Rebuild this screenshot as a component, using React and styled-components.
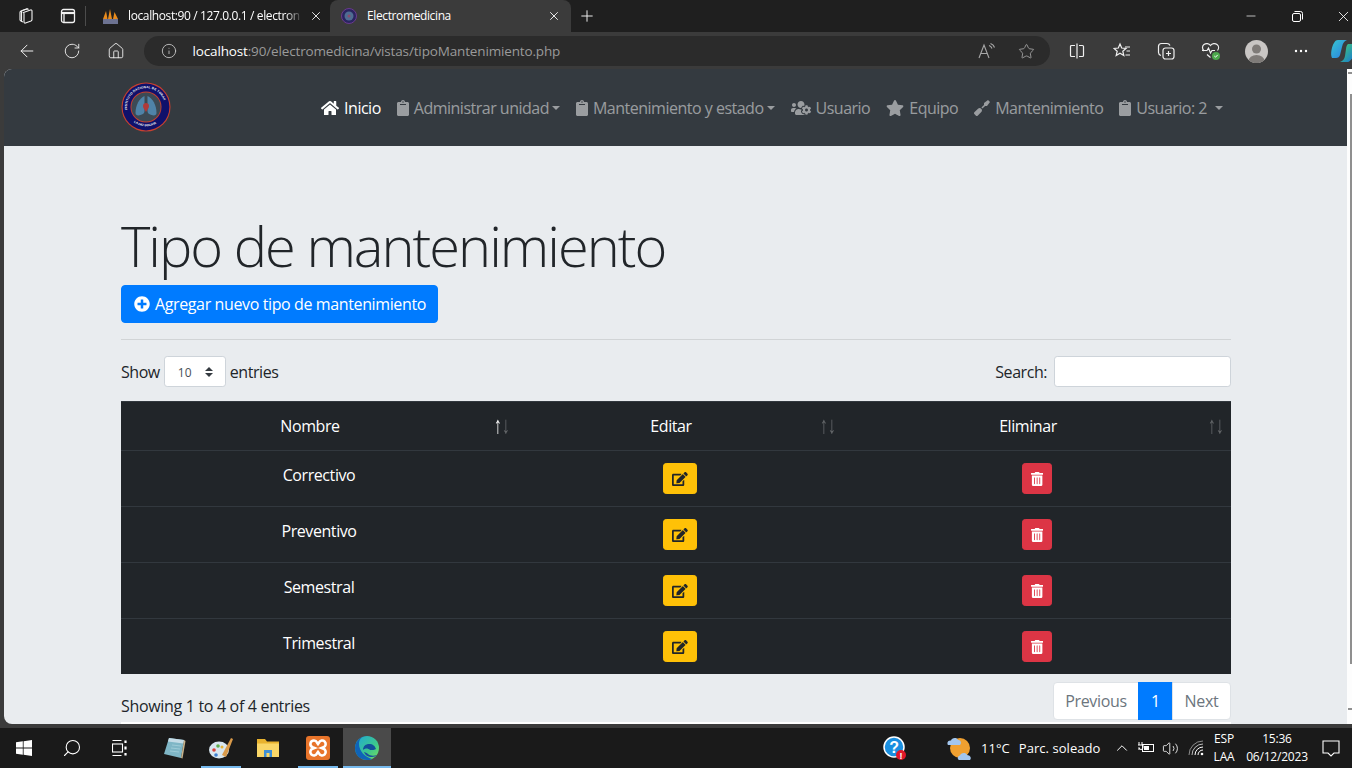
import styled, { createGlobalStyle } from "styled-components";
import {
  FaHome,
  FaClipboard,
  FaUsersCog,
  FaStar,
  FaScrewdriver,
  FaPlusCircle,
  FaEdit,
  FaTrashAlt,
} from "react-icons/fa";
import { ArrowLeft, RotateCw, Home, Info, Star, Plus, X, Minus, Search, ChevronUp, Volume2 } from "lucide-react";

const SANS = `"Open Sans", "Noto Sans", "Liberation Sans", sans-serif`;

const GlobalStyle = createGlobalStyle`
  html, body { margin: 0; padding: 0; height: 100%; overflow: hidden; background: #3b3b3b; }
  body { font-family: ${SANS}; font-size: 16px; line-height: 1.5; color: #212529; }
  * { box-sizing: border-box; }
`;

const Screen = styled.div`
  width: 1352px;
  height: 768px;
  display: flex;
  flex-direction: column;
  overflow: hidden;
  background: #3b3b3b;
`;

/* browser chrome */
const TabStrip = styled.div`
  height: 32px;
  flex: none;
  display: flex;
  align-items: flex-end;
  padding-left: 8px;
  background: #1f1f1f;
  color: #fff;
  font-size: 12px;
  letter-spacing: -0.38px;
`;

const StripButton = styled.div`
  width: 36px;
  height: 32px;
  margin-left: ${(p) => p.$ml || 0}px;
  margin-right: ${(p) => p.$mr || 0}px;
  flex: none;
  display: flex;
  align-items: center;
  justify-content: center;
  color: #f2f2f2;
`;

const StripDivider = styled.div`
  width: 1px;
  height: 20px;
  margin: 0 4px 6px -1px;
  background: #4c4c4c;
`;

const Tab = styled.div`
  width: ${(p) => p.$w}px;
  height: 32px;
  flex: none;
  display: flex;
  align-items: center;
  padding: 0 ${(p) => p.$pr}px 0 ${(p) => p.$pl}px;
  gap: 6px;
  border-radius: 8px 8px 0 0;
  background: ${(p) => (p.$active ? "#3b3b3b" : "transparent")};
`;

const TabTitle = styled.span`
  flex: 1;
  min-width: 0;
  margin-left: ${(p) => p.$ml || 4}px;
  white-space: nowrap;
  mask-image: ${(p) => (p.$fade ? "linear-gradient(to right, #000 90%, transparent)" : "none")};
`;

const WindowControls = styled.div`
  margin-left: auto;
  margin-right: -14px;
  display: flex;
  align-self: stretch;
`;

const WindowButton = styled.div`
  width: 46px;
  display: flex;
  align-items: center;
  justify-content: center;
  color: #fff;
`;

const Toolbar = styled.div`
  height: 37px;
  flex: none;
  display: flex;
  align-items: center;
  padding-left: 5px;
  padding-top: 1px;
  background: #3b3b3b;
`;

const ToolButton = styled.div`
  width: ${(p) => p.$w || 44.8}px;
  height: 30px;
  flex: none;
  display: flex;
  align-items: center;
  justify-content: center;
  color: #f0f0f0;
`;

const AddressBar = styled.div`
  width: 906px;
  height: 30px;
  flex: none;
  margin: 0 5px 0 5px;
  padding: 0 15px 0 17px;
  display: flex;
  align-items: center;
  border-radius: 15px;
  background: #2b2b2b;
  color: #c8c8c8;
`;

const Url = styled.div`
  flex: 1;
  margin-left: 16px;
  font-size: 13.5px;
  letter-spacing: -0.15px;
  color: #9a9a9a;
  b { font-weight: 400; color: #fff; }
`;

const AddressIcons = styled.div`
  display: flex;
  align-items: center;
  gap: 22px;
  color: #a8a8a8;
`;

const Avatar = styled.div`
  width: 23px;
  height: 23px;
  border-radius: 50%;
  overflow: hidden;
  background: #c9c6c4;
`;

/* page */
const Viewport = styled.div`
  height: 655px;
  flex: none;
  display: flex;
  padding-left: 4px;
`;

const Page = styled.div`
  flex: 1;
  min-width: 0;
  overflow: hidden;
  border-radius: 8px 0 0 8px;
  background: #e9ecef;
`;

const Scrollbar = styled.div`
  position: relative;
  width: 5px;
  flex: none;
  background: #fdfdfd;
`;

const ScrollThumb = styled.div`
  position: absolute;
  top: 25px;
  left: 3px;
  width: 2px;
  height: 570px;
  background: #8f8f8f;
`;

const ScrollArrow = styled.div`
  position: absolute;
  left: 1px;
  top: ${(p) => p.$top}px;
  width: 4px;
  height: 2px;
  background: #8f8f8f;
`;

const NavBar = styled.nav`
  height: 77px;
  padding-left: 117px;
  padding-right: 116px;
  display: flex;
  align-items: center;
  justify-content: space-between;
  background: #343a40;
`;

const Brand = styled.div`
  width: 50px;
  height: 50px;
  margin-top: -1px;
`;

const NavLinks = styled.div`
  display: flex;
  align-items: center;
`;

const NavLink = styled.a`
  display: flex;
  align-items: center;
  gap: 5px;
  padding: 8px;
  white-space: nowrap;
  letter-spacing: -0.5px;
  color: ${(p) => (p.$active ? "#fff" : "rgba(255,255,255,.5)")};
`;

/* FontAwesome glyphs are wider or narrower than one em, so each gets its width */
const Glyph = styled.span`
  width: ${(p) => p.$w}px;
  height: ${(p) => p.$h || 16}px;
  flex: none;
  display: inline-flex;
  svg { width: 100%; height: 100%; }
`;

const Caret = styled.span`
  width: 0;
  height: 0;
  margin-left: ${(p) => p.$ml ?? -2}px;
  border-top: 4.8px solid currentColor;
  border-left: 4.8px solid transparent;
  border-right: 4.8px solid transparent;
`;

const Container = styled.main`
  width: 1110px;
  margin-left: 117px;
  padding-top: 64px;
`;

const Title = styled.h1`
  margin: 2px 0 6px;
  font-size: 56px;
  font-weight: 300;
  line-height: 1.2;
  letter-spacing: -2px;
  color: #212529;
`;

const PrimaryButton = styled.button`
  height: 38px;
  width: 317px;
  padding: 0 12px;
  display: flex;
  align-items: center;
  gap: 5px;
  border: 1px solid #007bff;
  border-radius: 4px;
  background: #007bff;
  color: #fff;
  font: inherit;
  letter-spacing: -0.38px;
  white-space: nowrap;
`;

const Rule = styled.hr`
  margin: 16px 0;
  border: 0;
  border-top: 1px solid rgba(0, 0, 0, 0.1);
`;

const TableTools = styled.div`
  display: flex;
  justify-content: space-between;
  align-items: center;
  margin-bottom: 14px;
  letter-spacing: -0.45px;
`;

const ToolLabel = styled.label`
  display: flex;
  align-items: center;
  gap: ${(p) => p.$gap}px;
`;

const EntriesSelect = styled.select`
  width: 62px;
  height: 31px;
  padding: 5px 24px 3px 13px;
  appearance: none;
  border: 1px solid #ced4da;
  border-radius: 3.2px;
  font-family: inherit;
  font-size: 12px;
  color: #495057;
  background: #fff url("data:image/svg+xml,%3csvg xmlns='http://www.w3.org/2000/svg' width='4' height='5' viewBox='0 0 4 5'%3e%3cpath fill='%23343a40' d='M2 0L0 2h4zm0 5L0 3h4z'/%3e%3c/svg%3e") no-repeat right 12px center / 8px 10px;
`;

const SearchInput = styled.input`
  width: 177px;
  height: 31px;
  border: 1px solid #ced4da;
  border-radius: 3.2px;
  background: #fff;
`;

const DataTable = styled.table`
  width: 1110px;
  table-layout: fixed;
  border-collapse: collapse;
  background: #212529;
  color: #fff;
  letter-spacing: -0.42px;
`;

const HeadCell = styled.th`
  position: relative;
  height: 49px;
  padding: 12px 30px 12px 12px;
  font-weight: 400;
  text-align: center;
  vertical-align: top;
  border-top: 1px solid #32383e;
`;

const SortArrows = styled.span`
  position: absolute;
  top: 10px;
  right: 7px;
  display: flex;
  letter-spacing: 0;
  font-size: 16px;
  font-weight: 700;
  line-height: 24px;
`;

const SortArrow = styled.span`
  display: inline-block;
  transform: scaleY(1.5);
  opacity: ${(p) => (p.$on ? 1 : 0.3)};
`;

const BodyCell = styled.td`
  height: 56px;
  padding: 12px;
  text-align: center;
  vertical-align: top;
  border-top: 1px solid #32383e;
  tr:last-child > & { height: 55px; }
`;

const SmallButton = styled.button`
  height: 31px;
  padding: 0 8px;
  display: inline-flex;
  align-items: center;
  border: 1px solid ${(p) => p.$bg};
  border-radius: 3.2px;
  background: ${(p) => p.$bg};
  color: ${(p) => p.$fg};
`;

const TableFooter = styled.div`
  display: flex;
  justify-content: space-between;
  margin-top: 8px;
  letter-spacing: -0.32px;
`;

const EntriesInfo = styled.div`
  padding-top: 12px;
`;

const Pagination = styled.div`
  display: flex;
  height: 38px;
`;

const PageLink = styled.a`
  display: flex;
  align-items: center;
  justify-content: center;
  width: ${(p) => p.$w}px;
  border: 1px solid ${(p) => (p.$active ? "#007bff" : "#dee2e6")};
  margin-left: -1px;
  background: ${(p) => (p.$active ? "#007bff" : "#fff")};
  color: ${(p) => (p.$active ? "#fff" : "#6c757d")};
  &:first-child { border-radius: 4px 0 0 4px; margin-left: 0; }
  &:last-child { border-radius: 0 4px 4px 0; }
`;

const ClipBand = styled.div`
  height: 2px;
  margin-top: 2px;
  background: #fff;
`;

const Gutter = styled.div`
  height: 4px;
  flex: none;
  background: #3b3b3b;
`;

/* windows taskbar */
const Taskbar = styled.footer`
  height: 40px;
  flex: none;
  display: flex;
  align-items: stretch;
  background: #1a1a1a;
  color: #fff;
  font-size: 13px;
  letter-spacing: -0.1px;
`;

const TaskSlot = styled.div`
  position: relative;
  width: ${(p) => p.$w || 48}px;
  margin-left: ${(p) => p.$ml || 0}px;
  flex: none;
  display: flex;
  align-items: center;
  justify-content: center;
  background: ${(p) => (p.$current ? "#4a4a4a" : "transparent")};
`;

const RunningMark = styled.span`
  position: absolute;
  bottom: 0;
  left: ${(p) => p.$inset}px;
  right: ${(p) => p.$inset}px;
  height: 2px;
  background: #76b9ed;
`;

const WeatherText = styled.div`
  width: 119px;
  margin-left: 6px;
  margin-right: 10px;
  padding-top: 2px;
  flex: none;
  display: flex;
  align-items: center;
  gap: 9px;
  white-space: nowrap;
  letter-spacing: 0.05px;
`;

const Stacked = styled.div`
  width: ${(p) => p.$w}px;
  margin-left: ${(p) => p.$ml || 0}px;
  margin-right: ${(p) => p.$mr || 0}px;
  flex: none;
  display: flex;
  flex-direction: column;
  align-items: center;
  justify-content: center;
  font-size: 12px;
  line-height: 18px;
  white-space: nowrap;
  letter-spacing: -0.2px;
`;

const Logo = () => (
  <svg viewBox="0 0 50 50" width="50" height="50">
    <defs>
      <path id="ringTop" d="M8.500 34.500A19 19 0 1 1 41.500 34.500" />
      <path id="ringBottom" d="M10 37.500A20 20 0 0 0 40 37.500" />
    </defs>
    <circle cx="25" cy="25" r="24.500" fill="#c8402f" />
    <circle cx="25" cy="25" r="23.400" fill="#10116b" />
    <circle cx="25" cy="25" r="15.500" fill="#c8402f" />
    <circle cx="25" cy="25" r="14.600" fill="#3c4a55" />
    <path d="M23.500 14c-5 2-9 9-9 17 0 2 2 3 5 2 3-1 4-2 4-4z" fill="#4f83a8" />
    <path d="M26.500 14c5 2 9 9 9 17 0 2-2 3-5 2-3-1-4-2-4-4z" fill="#4f83a8" />
    <path d="M25 21c3 0 3.500 3 2.500 5l-2.500 4-2.500-4c-1-2-.5-5 2.500-5z" fill="#b03a3a" />
    <text fontFamily="Liberation Sans, sans-serif" fontSize="3.100" fontWeight="700" fill="#fff" letterSpacing=".2">
      <textPath href="#ringTop" startOffset="9%">INSTITUTO NACIONAL DE TORAX</textPath>
    </text>
    <text fontFamily="Liberation Sans, sans-serif" fontSize="3" fontWeight="700" fill="#fff">
      <textPath href="#ringBottom" startOffset="12%">LA PAZ BOLIVIA</textPath>
    </text>
  </svg>
);

const WorkspacesIcon = () => (
  <svg width="18" height="18" viewBox="0 0 18 18" fill="none" stroke="currentColor" strokeWidth="1.100">
    <path d="M6.500 5.500l7-2.500c1-.3 1.500.2 1.500 1v8.500c0 .8-.3 1.200-1 1.500l-5.500 2c-1 .3-1.500-.2-1.500-1V7c0-.8 0-1.200-.5-1.500z" />
    <path d="M6 15c-1.500-.5-2.500-1-3-2V5.500c0-.7.300-1.200 1-1.500l5.500-2c1-.3 1.500 0 2 .5" />
    <path d="M4.500 14.500V5c0-.7.300-1.100 1-1.400l5-1.800" />
  </svg>
);

const TabsIcon = () => (
  <svg width="16" height="16" viewBox="0 0 16 16" fill="none" stroke="currentColor" strokeWidth="1.300">
    <rect x="1.500" y="1.500" width="13" height="13" rx="2" />
    <path d="M1.500 5h13" strokeWidth="2.200" />
    <path d="M4 5v9.500" />
  </svg>
);

const PmaIcon = () => (
  <svg width="17" height="17" viewBox="0 0 17 17">
    <path d="M1 11L4 3l1.500 8zM6 11l2-10 2 10zM11 11l1.500-7L16 11z" fill="#e88b1d" />
    <rect x="1" y="11" width="15" height="5" fill="#6d7392" />
  </svg>
);

const TabLogo = () => (
  <svg width="16" height="16" viewBox="0 0 16 16">
    <circle cx="8" cy="8" r="7.500" fill="#2a2560" stroke="#6b3a8f" />
    <circle cx="8" cy="8" r="4.500" fill="#4f6d92" />
    <circle cx="8" cy="8" r="1.500" fill="#8c4b6b" />
  </svg>
);

const RestoreIcon = () => (
  <svg width="11" height="11" viewBox="0 0 11 11" fill="none" stroke="currentColor">
    <rect x=".5" y="2.500" width="8" height="8" rx="1.500" />
    <path d="M2.500 .5h6a2 2 0 0 1 2 2v6" />
  </svg>
);

const ReadAloudIcon = () => (
  <svg width="18" height="16" viewBox="0 0 18 16" fill="none" stroke="currentColor" strokeWidth="1.100">
    <path d="M1 15L6 2l5 13M2.800 10.500h6.400" />
    <path d="M11 2.500c1.500.5 2.500 1.500 3 3M12.500 .5c2 .7 3.500 2 4 4" />
  </svg>
);

const SplitIcon = () => (
  <svg width="16" height="16" viewBox="0 0 16 16" fill="none" stroke="currentColor" strokeWidth="1.200">
    <path d="M6 2.500H2.500a1 1 0 0 0-1 1v9a1 1 0 0 0 1 1H6M10 2.500h3.500a1 1 0 0 1 1 1v9a1 1 0 0 1-1 1H10M8 .5v15" />
  </svg>
);

const FavoritesIcon = () => (
  <svg width="18" height="18" viewBox="0 0 18 18" fill="none" stroke="currentColor" strokeWidth="1.200">
    <path d="M7 2l1.700 4 4.300.4-3.200 2.800 1 4.300L7 11.200 3.200 13.500l1-4.300L1 6.400 5.300 6z" />
    <path d="M12 5h5M13.500 9H17M12.500 13H17" />
  </svg>
);

const CollectionsIcon = () => (
  <svg width="18" height="18" viewBox="0 0 18 18" fill="none" stroke="currentColor" strokeWidth="1.200">
    <rect x="6" y="6" width="11" height="11" rx="2.500" />
    <path d="M11.500 9v5M9 11.500h5" />
    <path d="M4 13.500C2.500 13 1.500 12 1.500 10.500v-6c0-1.700 1.300-3 3-3h5.500c1.300 0 2.500.8 3 2" />
  </svg>
);

const HealthIcon = () => (
  <svg width="20" height="20" viewBox="0 0 20 20" fill="none">
    <path d="M3 10C1 8 1 5 3 3.500s5-1 6.500 1c1.500-2 4.500-2.500 6.500-1s2 4 .5 6M6 13.500l3.500 3" stroke="currentColor" strokeWidth="1.200" />
    <path d="M1 9.500h5l1.500-2.500 2 5 1.500-2.500h3" stroke="currentColor" strokeWidth="1.200" />
    <circle cx="15" cy="15" r="4" fill="#4ca84c" />
    <path d="M13.300 15l1.200 1.200 2.200-2.300" stroke="#fff" />
  </svg>
);

const CopilotIcon = () => (
  <svg width="26" height="26" viewBox="0 0 26 26" style={{ flex: "none" }}>
    <defs>
      <linearGradient id="copilotA" x1="0" y1="0" x2="1" y2="1">
        <stop offset="0" stopColor="#37c6d0" />
        <stop offset="1" stopColor="#2a7be0" />
      </linearGradient>
      <linearGradient id="copilotB" x1="0" y1="0" x2="1" y2="1">
        <stop offset="0" stopColor="#45d06c" />
        <stop offset="1" stopColor="#1677d8" />
      </linearGradient>
    </defs>
    <path d="M8 2h9c-3 1-4 3-5 7l-2 8c-.5 2-2 3-4 3H2C0 16 2 8 4 5c1-2 2-3 4-3z" fill="url(#copilotA)" />
    <path d="M18 6h5c3 6 1 15-5 18h-8c3-1 4.500-3 5-6l1-7c.3-2 .5-4 2-5z" fill="url(#copilotB)" />
  </svg>
);

const WindowsLogo = () => (
  <svg width="16" height="16" viewBox="0 0 16 16" fill="#fff">
    <path d="M0 2.300l6.800-1v6.300H0zM7.600 1.200L16 0v7.600H7.600zM0 8.400h6.800v6.300L0 13.700zM7.600 8.400H16V16l-8.400-1.200z" />
  </svg>
);

const TaskViewIcon = () => (
  <svg width="16" height="16" viewBox="0 0 16 16" fill="none" stroke="#fff" strokeWidth="1.100">
    <path d="M.5.500h9M.5 15.500h9" />
    <rect x=".5" y="4" width="10" height="8" />
    <path d="M13.500 .5v2.500M13.500 6.500v3M13.500 13v2.500" strokeWidth="2.200" />
  </svg>
);

const NotepadIcon = () => (
  <svg width="24" height="24" viewBox="0 0 24 24">
    <path d="M6 2l15 2-3 18L1 18z" fill="#7fb6c6" />
    <path d="M6 2l15 2-.6 3.500L5 5.500z" fill="#c4dbe6" />
    <path d="M9 9l9 1M8 12l9 1M7 15l9 1" stroke="#a5cfda" strokeWidth=".8" />
    <path d="M21 4l1.500 1-3 17.500L18 22z" fill="#c9b48c" />
  </svg>
);

const PaintIcon = () => (
  <svg width="26" height="26" viewBox="0 0 26 26">
    <ellipse cx="11" cy="15" rx="10" ry="8.500" fill="#d8e6ef" />
    <circle cx="6" cy="15" r="1.800" fill="#d9423a" />
    <circle cx="10" cy="11" r="1.800" fill="#5fae4c" />
    <circle cx="14" cy="12" r="1.500" fill="#e4b43a" />
    <circle cx="8" cy="20" r="1.800" fill="#3e7fcf" />
    <path d="M14 20L23 3l2 1-7 18z" fill="#d99a4a" />
  </svg>
);

const FolderIcon = () => (
  <svg width="24" height="22" viewBox="0 0 24 22">
    <path d="M1 2h8l2 2.500h12V20H1z" fill="#e8b22e" />
    <path d="M1 6.500h22V20H1z" fill="#f9d667" />
    <path d="M8 13h8v7H8z" fill="#3f8fd6" />
    <path d="M10.500 16h3v4h-3z" fill="#f9d667" />
  </svg>
);

const XamppIcon = () => (
  <svg width="24" height="24" viewBox="0 0 24 24">
    <rect width="24" height="24" rx="3" fill="#e8742a" />
    <path d="M8 4.500a3.500 3.500 0 0 0-1.500 6.700L8.500 12l-2 .8A3.500 3.500 0 1 0 11 17.500l1-1.500 1 1.500a3.500 3.500 0 1 0 4.500-4.700l-2-.8 2-.8A3.500 3.500 0 1 0 13 6.500L12 8l-1-1.500A3.500 3.500 0 0 0 8 4.500z" fill="none" stroke="#fff" strokeWidth="2.600" />
  </svg>
);

const EdgeIcon = () => (
  <svg width="26" height="26" viewBox="0 0 26 26">
    <defs>
      <linearGradient id="edgeA" x1="0" y1="0" x2="1" y2="1">
        <stop offset="0" stopColor="#1fa8d8" />
        <stop offset=".6" stopColor="#3dc78c" />
        <stop offset="1" stopColor="#78e060" />
      </linearGradient>
    </defs>
    <circle cx="13" cy="13" r="12" fill="url(#edgeA)" />
    <path d="M1 13C1 6 7 1 13 1c-5 0-8 3-8 8 0 7 6 13 13 15-2 1-3 1-5 1C6 25 1 20 1 13z" fill="#0f63b8" />
    <path d="M9 15c0-4 3-6 6-6 4 0 6 2 7 5-1 1-4 1-6 1-2-2-5-2-7 0z" fill="#124f9a" />
    <path d="M10 17c1 3 4 5 8 5 2 0 4-1 5-2-3 1-7 1-9-1-1-1-3-2-4-2z" fill="#1b4f9e" />
  </svg>
);

const HelpIcon = () => (
  <svg width="24" height="24" viewBox="0 0 24 24">
    <circle cx="11" cy="11" r="10" fill="#1a8fe0" stroke="#fff" strokeWidth="1.500" />
    <text x="11" y="16.500" textAnchor="middle" fontFamily="Liberation Sans, sans-serif" fontSize="16" fontWeight="700" fill="#fff">?</text>
    <circle cx="18" cy="19" r="5" fill="#e0182a" />
    <text x="18" y="22.500" textAnchor="middle" fontFamily="Liberation Sans, sans-serif" fontSize="9" fontWeight="700" fill="#fff">!</text>
  </svg>
);

const WeatherIcon = () => (
  <svg width="26" height="26" viewBox="0 0 26 26">
    <circle cx="13" cy="13" r="10" fill="#f0a030" />
    <path d="M1 10c-1.500-2 0-5 3-4.500C4.500 2.500 10 2 11 5c2.500-.5 4 3 2 5z" fill="#a3c6ee" />
    <path d="M12 25c-2-1-1.500-4 1-4.500.5-3 6-3.500 7-.5 3 0 5 3 3 5z" fill="#a3c6ee" />
  </svg>
);

const BatteryIcon = () => (
  <svg width="18" height="14" viewBox="0 0 18 14" fill="none" stroke="#fff">
    <rect x="5.500" y="3.500" width="11" height="7" />
    <rect x="7" y="5" width="5" height="4" fill="#fff" stroke="none" />
    <path d="M2 1v3M5 1v3M1 4h5v2.500a2 2 0 0 1-4 0V9" strokeWidth="1" />
  </svg>
);

const CornerWifiIcon = () => (
  <svg width="16" height="16" viewBox="0 0 16 16" fill="none" stroke="#fff" strokeWidth="1">
    <path d="M1 15A14 14 0 0 1 15 1" opacity=".5" />
    <path d="M4 15A11 11 0 0 1 15 4" opacity=".7" />
    <path d="M7 15a8 8 0 0 1 8-8" />
    <path d="M10 15a5 5 0 0 1 5-5" />
    <circle cx="14" cy="14" r="1.300" fill="#fff" stroke="none" />
  </svg>
);

const NotificationIcon = () => (
  <svg width="18" height="17" viewBox="0 0 18 17" fill="none" stroke="#fff" strokeWidth="1.100">
    <path d="M1 1h16v12h-5l-3 3-3-3H1z" />
  </svg>
);

const rows = ["Correctivo", "Preventivo", "Semestral", "Trimestral"];
const columns = [
  { name: "Nombre", width: 396, sorted: true },
  { name: "Editar", width: 326 },
  { name: "Eliminar", width: 388 },
];

export default function App() {
  return (
    <Screen>
      <GlobalStyle />
      <TabStrip>
        <StripButton $mr={6}><WorkspacesIcon /></StripButton>
        <StripButton><TabsIcon /></StripButton>
        <StripDivider />
        <Tab $w={240} $pl={12} $pr={7}>
          <PmaIcon />
          <TabTitle $fade $ml={3}>localhost:90 / 127.0.0.1 / electron</TabTitle>
          <X size={14} strokeWidth={1.5} />
        </Tab>
        <Tab $w={241} $pl={11} $pr={10} $active>
          <TabLogo />
          <TabTitle>Electromedicina</TabTitle>
          <X size={14} strokeWidth={1.5} />
        </Tab>
        <StripButton $ml={-2}><Plus size={18} strokeWidth={1.3} /></StripButton>
        <WindowControls>
          <WindowButton><Minus size={14} strokeWidth={1.2} /></WindowButton>
          <WindowButton><RestoreIcon /></WindowButton>
          <WindowButton><X size={17} strokeWidth={1.2} /></WindowButton>
        </WindowControls>
      </TabStrip>

      <Toolbar>
        <ToolButton $w={44.5}><ArrowLeft size={20} strokeWidth={1.2} /></ToolButton>
        <ToolButton $w={44.5}><RotateCw size={18} strokeWidth={1.2} /></ToolButton>
        <ToolButton $w={44.5}><Home size={18} strokeWidth={1.2} /></ToolButton>
        <AddressBar>
          <Info size={16} strokeWidth={1.3} />
          <Url><b>localhost</b>:90/electromedicina/vistas/tipoMantenimiento.php</Url>
          <AddressIcons>
            <ReadAloudIcon />
            <Star size={17} strokeWidth={1.2} />
          </AddressIcons>
        </AddressBar>
        <ToolButton><SplitIcon /></ToolButton>
        <ToolButton><FavoritesIcon /></ToolButton>
        <ToolButton><CollectionsIcon /></ToolButton>
        <ToolButton><HealthIcon /></ToolButton>
        <ToolButton>
          <Avatar>
            <svg width="23" height="23" viewBox="0 0 23 23">
              <circle cx="11.500" cy="9" r="4.500" fill="#7f7b78" />
              <ellipse cx="11.500" cy="21" rx="8" ry="6" fill="#7f7b78" />
            </svg>
          </Avatar>
        </ToolButton>
        <ToolButton>
          <svg width="14" height="4" viewBox="0 0 14 4" fill="#fff">
            <circle cx="2" cy="2" r="1.200" />
            <circle cx="7" cy="2" r="1.200" />
            <circle cx="12" cy="2" r="1.200" />
          </svg>
        </ToolButton>
        <ToolButton $w={40}><CopilotIcon /></ToolButton>
      </Toolbar>

      <Viewport>
        <Page>
          <NavBar>
            <Brand><Logo /></Brand>
            <NavLinks>
              <NavLink $active><Glyph $w={18}><FaHome /></Glyph>Inicio</NavLink>
              <NavLink><Glyph $w={12}><FaClipboard /></Glyph>Administrar unidad<Caret /></NavLink>
              <NavLink><Glyph $w={12}><FaClipboard /></Glyph>Mantenimiento y estado<Caret /></NavLink>
              <NavLink><Glyph $w={20}><FaUsersCog /></Glyph>Usuario</NavLink>
              <NavLink><Glyph $w={18}><FaStar /></Glyph>Equipo</NavLink>
              <NavLink><Glyph $w={16}><FaScrewdriver /></Glyph>Mantenimiento</NavLink>
              <NavLink><Glyph $w={12}><FaClipboard /></Glyph>Usuario: 2<Caret $ml={3} /></NavLink>
            </NavLinks>
          </NavBar>
          <Container>
            <Title>Tipo de mantenimiento</Title>
            <PrimaryButton><Glyph $w={16}><FaPlusCircle /></Glyph>Agregar nuevo tipo de mantenimiento</PrimaryButton>
            <Rule />
            <TableTools>
              <ToolLabel $gap={4}>
                Show
                <EntriesSelect defaultValue="10">
                  <option>10</option>
                  <option>25</option>
                  <option>50</option>
                  <option>100</option>
                </EntriesSelect>
                entries
              </ToolLabel>
              <ToolLabel $gap={7}>
                Search:
                <SearchInput type="search" />
              </ToolLabel>
            </TableTools>
            <DataTable>
              <colgroup>
                {columns.map((c) => <col key={c.name} width={c.width} />)}
              </colgroup>
              <thead>
                <tr>
                  {columns.map((c) => (
                    <HeadCell key={c.name}>
                      {c.name}
                      <SortArrows>
                        <SortArrow $on={c.sorted}>↑</SortArrow>
                        <SortArrow>↓</SortArrow>
                      </SortArrows>
                    </HeadCell>
                  ))}
                </tr>
              </thead>
              <tbody>
                {rows.map((name) => (
                  <tr key={name}>
                    <BodyCell>{name}</BodyCell>
                    <BodyCell><SmallButton $bg="#ffc107" $fg="#212529"><Glyph $w={15.75} $h={14}><FaEdit /></Glyph></SmallButton></BodyCell>
                    <BodyCell><SmallButton $bg="#dc3545" $fg="#fff"><Glyph $w={12.25} $h={14}><FaTrashAlt /></Glyph></SmallButton></BodyCell>
                  </tr>
                ))}
              </tbody>
            </DataTable>
            <TableFooter>
              <EntriesInfo>Showing 1 to 4 of 4 entries</EntriesInfo>
              <Pagination>
                <PageLink $w={86}>Previous</PageLink>
                <PageLink $w={35} $active>1</PageLink>
                <PageLink $w={59}>Next</PageLink>
              </Pagination>
            </TableFooter>
            <ClipBand />
          </Container>
        </Page>
        <Scrollbar>
          <ScrollArrow $top={3} />
          <ScrollThumb />
          <ScrollArrow $top={639} />
        </Scrollbar>
      </Viewport>
      <Gutter />

      <Taskbar>
        <TaskSlot><WindowsLogo /></TaskSlot>
        <TaskSlot><Search size={20} strokeWidth={1.3} style={{ transform: "scaleX(-1)" }} /></TaskSlot>
        <TaskSlot><TaskViewIcon /></TaskSlot>
        <TaskSlot $ml={8} $w={46}><NotepadIcon /></TaskSlot>
        <TaskSlot $w={46}><PaintIcon /><RunningMark $inset={3} /></TaskSlot>
        <TaskSlot><FolderIcon /></TaskSlot>
        <TaskSlot $ml={2}><XamppIcon /><RunningMark $inset={4} /></TaskSlot>
        <TaskSlot $ml={1} $current><EdgeIcon /><RunningMark $inset={0} /></TaskSlot>

        <TaskSlot $ml={489} $w={30}><HelpIcon /></TaskSlot>
        <TaskSlot $ml={35} $w={30}><WeatherIcon /></TaskSlot>
        <WeatherText><span>11°C</span><span>Parc. soleado</span></WeatherText>
        <TaskSlot $w={24}><ChevronUp size={18} strokeWidth={1.3} /></TaskSlot>
        <TaskSlot $w={24}><BatteryIcon /></TaskSlot>
        <TaskSlot $w={24}><Volume2 size={17} strokeWidth={1.2} /></TaskSlot>
        <TaskSlot $ml={2} $w={24}><CornerWifiIcon /></TaskSlot>
        <Stacked $w={30} $ml={1} $mr={4}><span>ESP</span><span>LAA</span></Stacked>
        <Stacked $w={68}><span>15:36</span><span>06/12/2023</span></Stacked>
        <TaskSlot $w={40}><NotificationIcon /></TaskSlot>
      </Taskbar>
    </Screen>
  );
}
